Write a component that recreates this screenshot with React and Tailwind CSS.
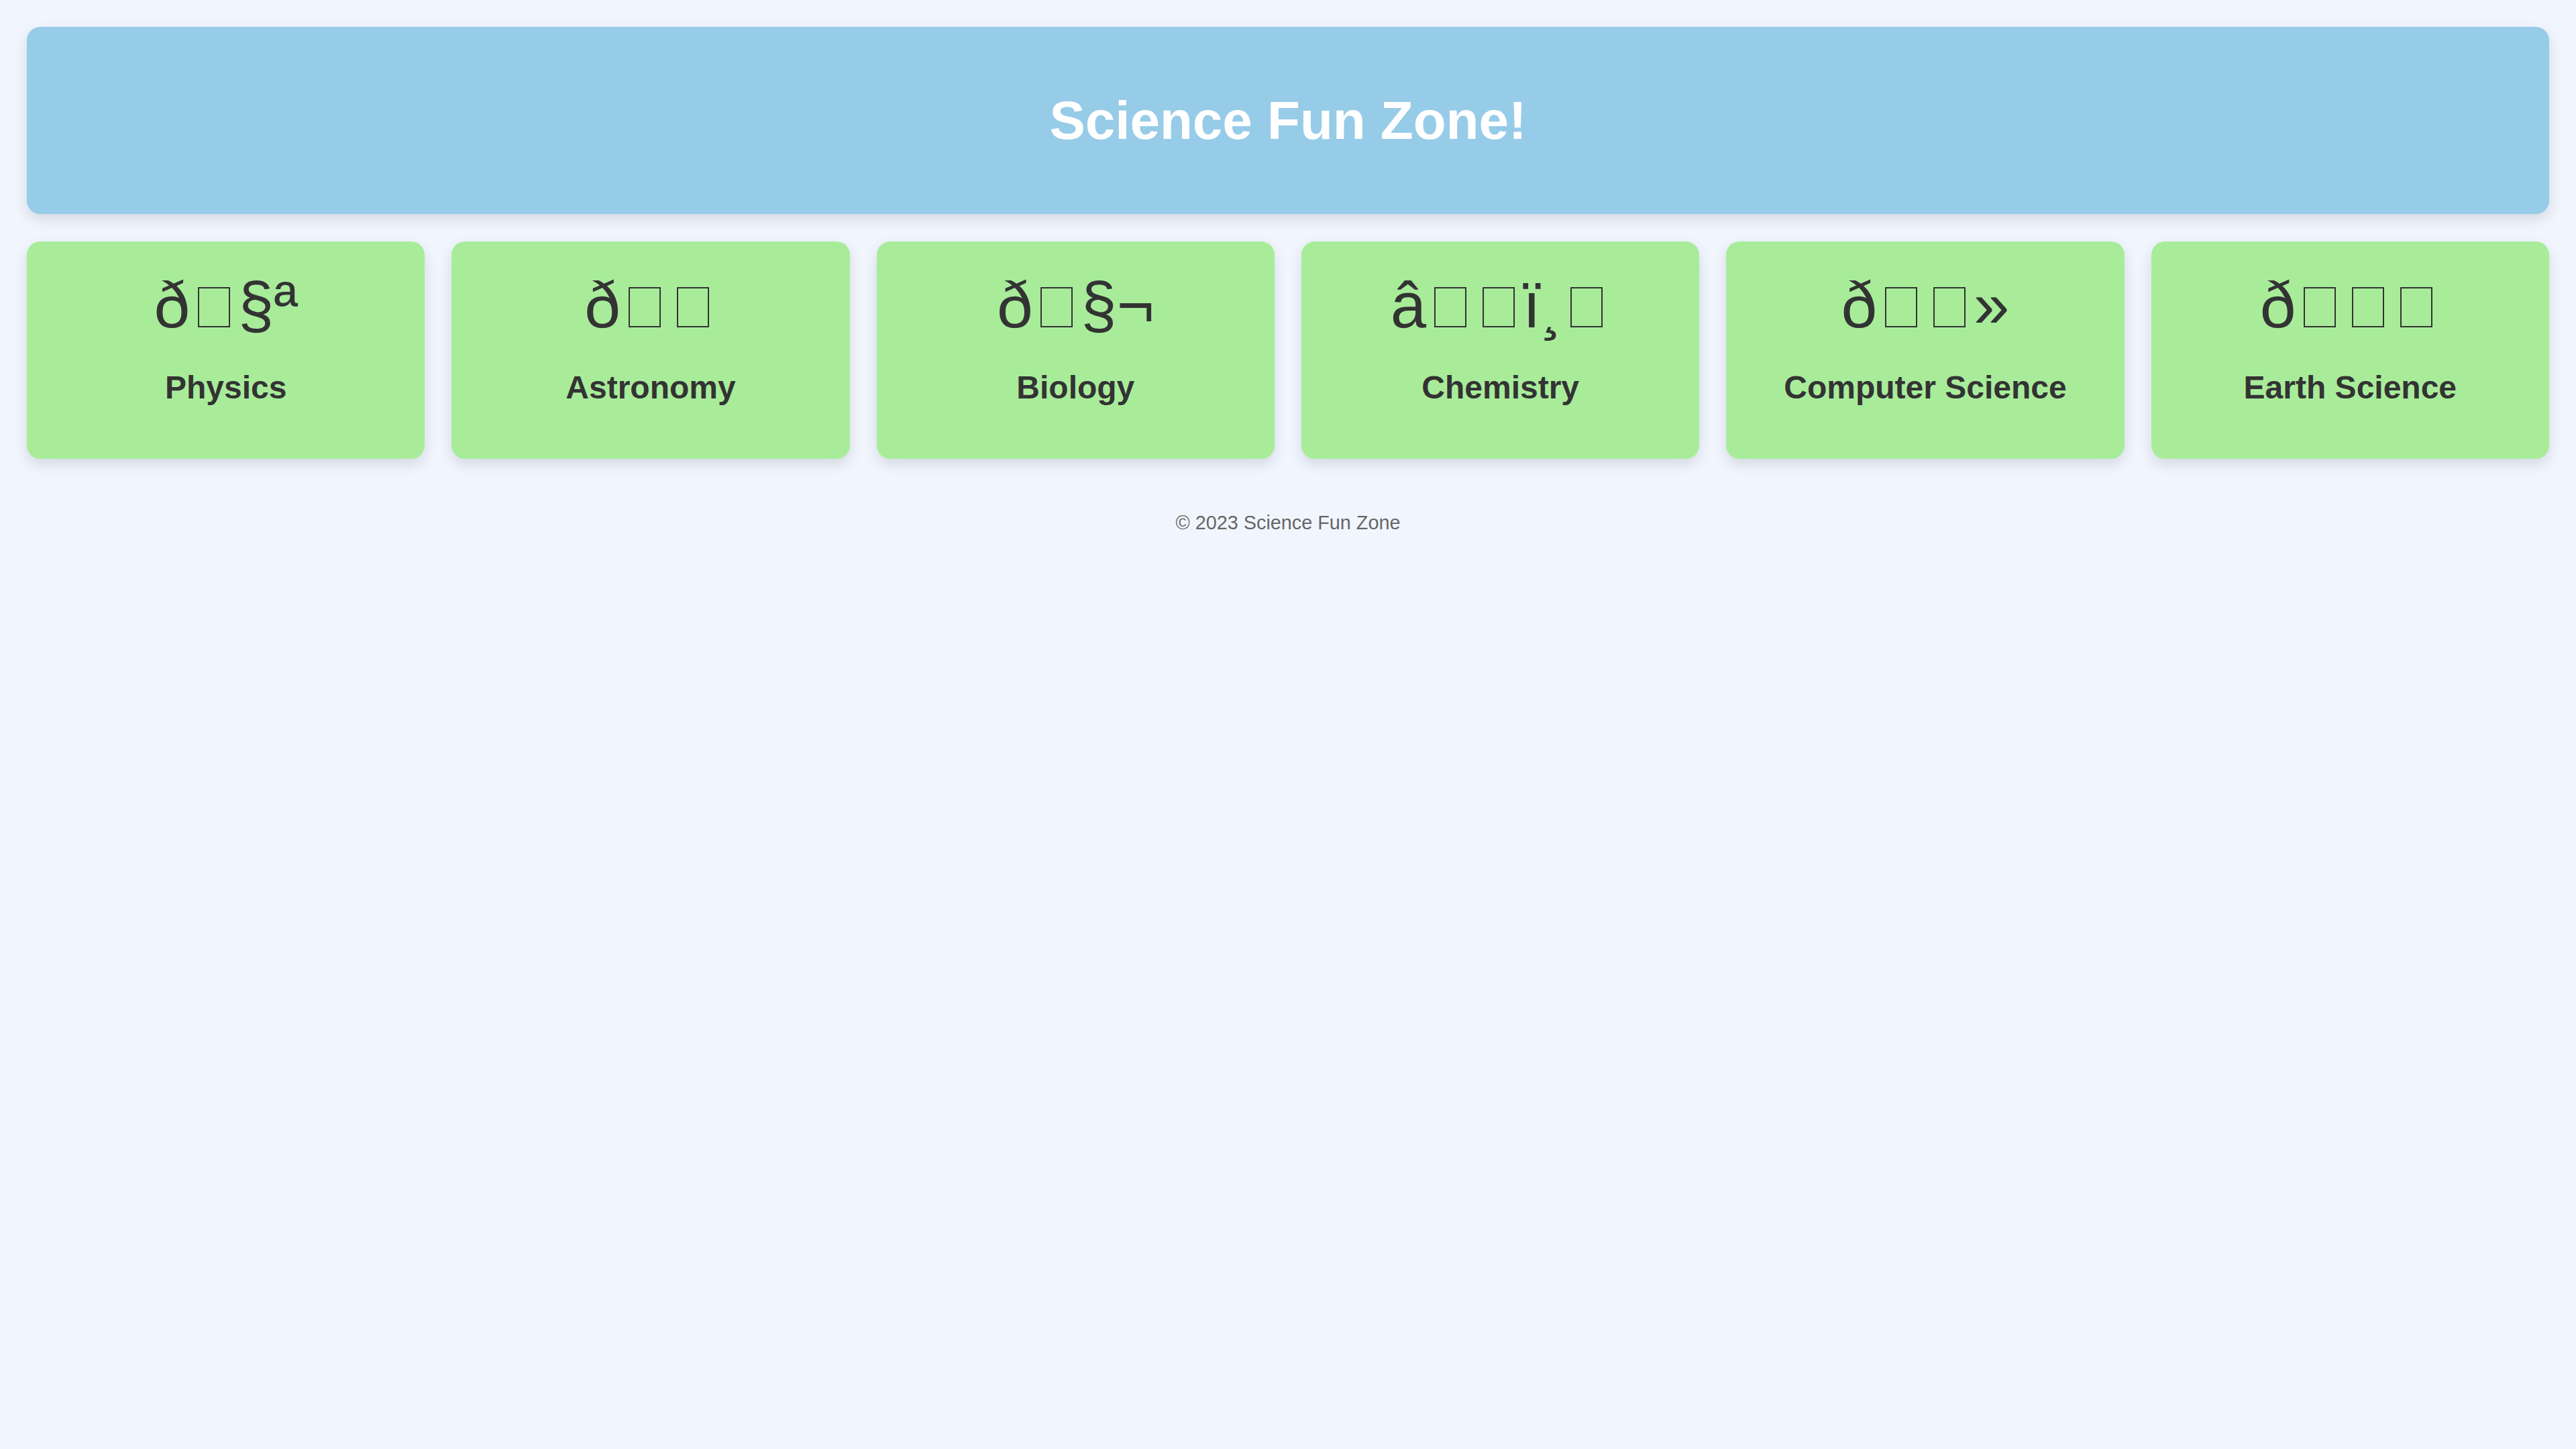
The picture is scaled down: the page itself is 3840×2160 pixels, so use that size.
import React from "react";

/* topics: the icon strings are kept exactly as the page shows them */
const topics = [
    { icon: "\u00f0\u009f\u00a7\u00aa", name: "Physics" },
    { icon: "\u00f0\u009f\u0094\u00ad", name: "Astronomy" },
    { icon: "\u00f0\u009f\u00a7\u00ac", name: "Biology" },
    { icon: "\u00e2\u009a\u0097\u00ef\u00b8\u008f", name: "Chemistry" },
    { icon: "\u00f0\u009f\u0092\u00bb", name: "Computer Science" },
    { icon: "\u00f0\u009f\u008c\u008d", name: "Earth Science" }
];

/* control characters show up as empty boxes, soft hyphens not at all */
const isControl = ch => ch >= "\u0080" && ch <= "\u009f";

const IconText = ({ text }) => (
    <>
        {Array.from(text)
            .filter(ch => ch !== "\u00ad")
            .map((ch, i) =>
                isControl(ch) ? (
                    <span
                        key={i}
                        aria-hidden="true"
                        className="mx-[12px] inline-block h-[60px] w-[48px] border-[2px] border-[#333333] align-baseline"
                    />
                ) : (
                    <span key={i}>{ch}</span>
                )
            )}
    </>
);

const TopicCard = ({ icon, name }) => (
    <div className="rounded-[20px] bg-[#a8ec9a] pt-[40px] pb-[79px] text-center text-[#333333] shadow-[0_8px_20px_rgba(0,0,0,0.12)]">
        <div className="text-[96px] leading-[1.149]">
            <IconText text={icon} />
        </div>
        <h3 className="mt-[40px] text-[48px] font-bold leading-[1.149]">{name}</h3>
    </div>
);

const App = () => {
    return (
        <div className="min-h-screen bg-[#f1f6fe] p-[40px] font-['Liberation_Sans',Arial,sans-serif]">

            {/* HEADER */}
            <header className="flex h-[279px] items-center justify-center rounded-[20px] bg-[#97cce8] shadow-[0_8px_20px_rgba(0,0,0,0.12)]">
                <h1 className="text-[80px] font-bold leading-[1.149] text-white">Science Fun Zone!</h1>
            </header>

            {/* TOPICS */}
            <div className="mt-[41px] grid grid-cols-6 gap-[40px]">
                {topics.map(t => (
                    <TopicCard key={t.name} icon={t.icon} name={t.name} />
                ))}
            </div>

            {/* FOOTER */}
            <footer className="pt-[79px] text-center text-[28.8px] leading-[1.149] text-[#666666]">
                © 2023 Science Fun Zone
            </footer>
        </div>
    );
};

export default App;
